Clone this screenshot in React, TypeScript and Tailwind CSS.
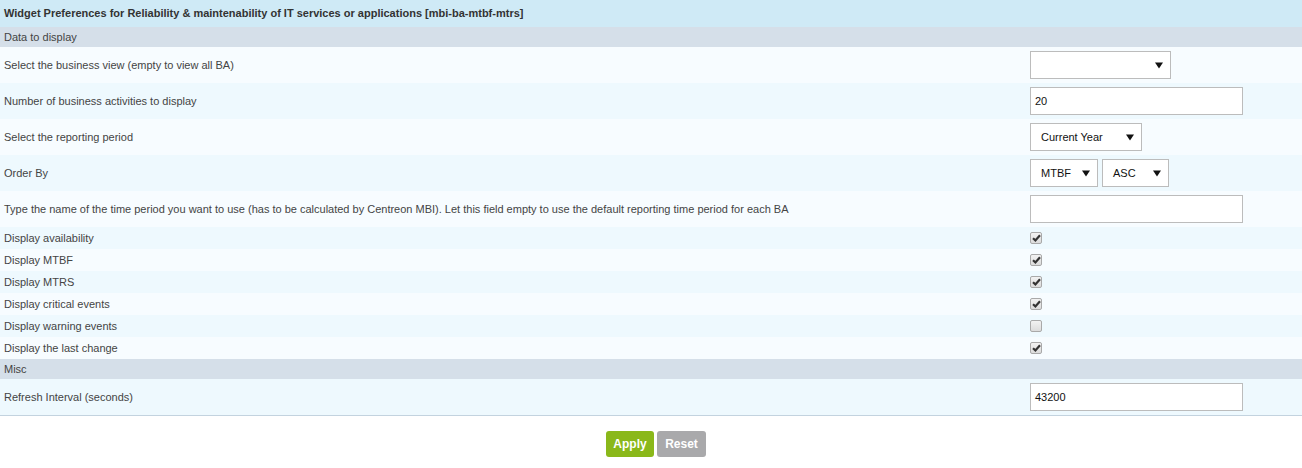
import type { ReactNode } from "react";

const font = { fontFamily: '"Liberation Sans", Arial, sans-serif' };

function Arrow() {
  return (
    <svg width="8" height="8" viewBox="0 0 8 8" className="shrink-0">
      <path d="M0 1.5 L8 1.5 L4 7.5 Z" fill="#111" />
    </svg>
  );
}

function Select({ value, width }: { value: string; width: string }) {
  return (
    <div className={`${width} h-[28px] flex items-center justify-between border border-[#bcbcbc] bg-white pl-[10px] pr-[7px] text-[11px] text-[#111]`}>
      <span>{value}</span>
      <Arrow />
    </div>
  );
}

function TextInput({ value }: { value: string }) {
  return (
    <div className="w-[213px] h-[28px] flex items-center border border-[#bcbcbc] bg-white px-[4px] text-[11px] text-[#111]">
      {value}
    </div>
  );
}

function Checkbox({ checked }: { checked: boolean }) {
  return (
    <div className="w-[12px] h-[12px] rounded-[2px] border border-[#a9a9a9] bg-gradient-to-b from-[#f2f2f2] to-[#dcdcdc] flex items-center justify-center">
      {checked && (
        <svg width="9" height="8" viewBox="0 0 9 8">
          <path d="M1 4.2 L3.4 6.4 L8 1.2" stroke="#333" strokeWidth="2.2" fill="none" />
        </svg>
      )}
    </div>
  );
}

function Row({ label, alt, tall, children }: { label: string; alt?: boolean; tall?: boolean; children: ReactNode }) {
  return (
    <div className={`flex items-center ${tall ? "h-[36px]" : "h-[22px]"} ${alt ? "bg-[#eef9fe]" : "bg-[#f7fcff]"}`}>
      <div className="w-[1030px] pl-[4px] text-[11px] text-[#444]">{label}</div>
      <div className="flex items-center gap-[4px]">{children}</div>
    </div>
  );
}

function Section({ title }: { title: string }) {
  return <div className="h-[20px] flex items-center pl-[4px] bg-[#d5dfe9] text-[11px] text-[#444]">{title}</div>;
}

export default function App() {
  return (
    <div className="w-[1302px] h-[468px] bg-white" style={font}>
      <div className="h-[27px] flex items-center pl-[4px] bg-[#cfeaf6] text-[11px] font-bold text-[#333]">
        Widget Preferences for Reliability &amp; maintenability of IT services or applications [mbi-ba-mtbf-mtrs]
      </div>
      <Section title="Data to display" />
      <Row label="Select the business view (empty to view all BA)" tall>
        <Select value="" width="w-[141px]" />
      </Row>
      <Row label="Number of business activities to display" alt tall>
        <TextInput value="20" />
      </Row>
      <Row label="Select the reporting period" tall>
        <Select value="Current Year" width="w-[112px]" />
      </Row>
      <Row label="Order By" alt tall>
        <Select value="MTBF" width="w-[68px]" />
        <Select value="ASC" width="w-[67px]" />
      </Row>
      <Row label="Type the name of the time period you want to use (has to be calculated by Centreon MBI). Let this field empty to use the default reporting time period for each BA" tall>
        <TextInput value="" />
      </Row>
      <Row label="Display availability" alt>
        <Checkbox checked />
      </Row>
      <Row label="Display MTBF">
        <Checkbox checked />
      </Row>
      <Row label="Display MTRS" alt>
        <Checkbox checked />
      </Row>
      <Row label="Display critical events">
        <Checkbox checked />
      </Row>
      <Row label="Display warning events" alt>
        <Checkbox checked={false} />
      </Row>
      <Row label="Display the last change">
        <Checkbox checked />
      </Row>
      <Section title="Misc" />
      <div className="border-b border-[#c3d3df]">
        <Row label="Refresh Interval (seconds)" alt tall>
          <TextInput value="43200" />
        </Row>
      </div>
      <div className="flex justify-center gap-[3px] pt-[15px] pl-[10px]">
        <button className="h-[26px] w-[48px] rounded-[3px] bg-[#8ab81a] text-[12px] font-bold text-white">Apply</button>
        <button className="h-[26px] w-[49px] rounded-[3px] bg-[#a9a9ab] text-[12px] font-bold text-white">Reset</button>
      </div>
    </div>
  );
}
